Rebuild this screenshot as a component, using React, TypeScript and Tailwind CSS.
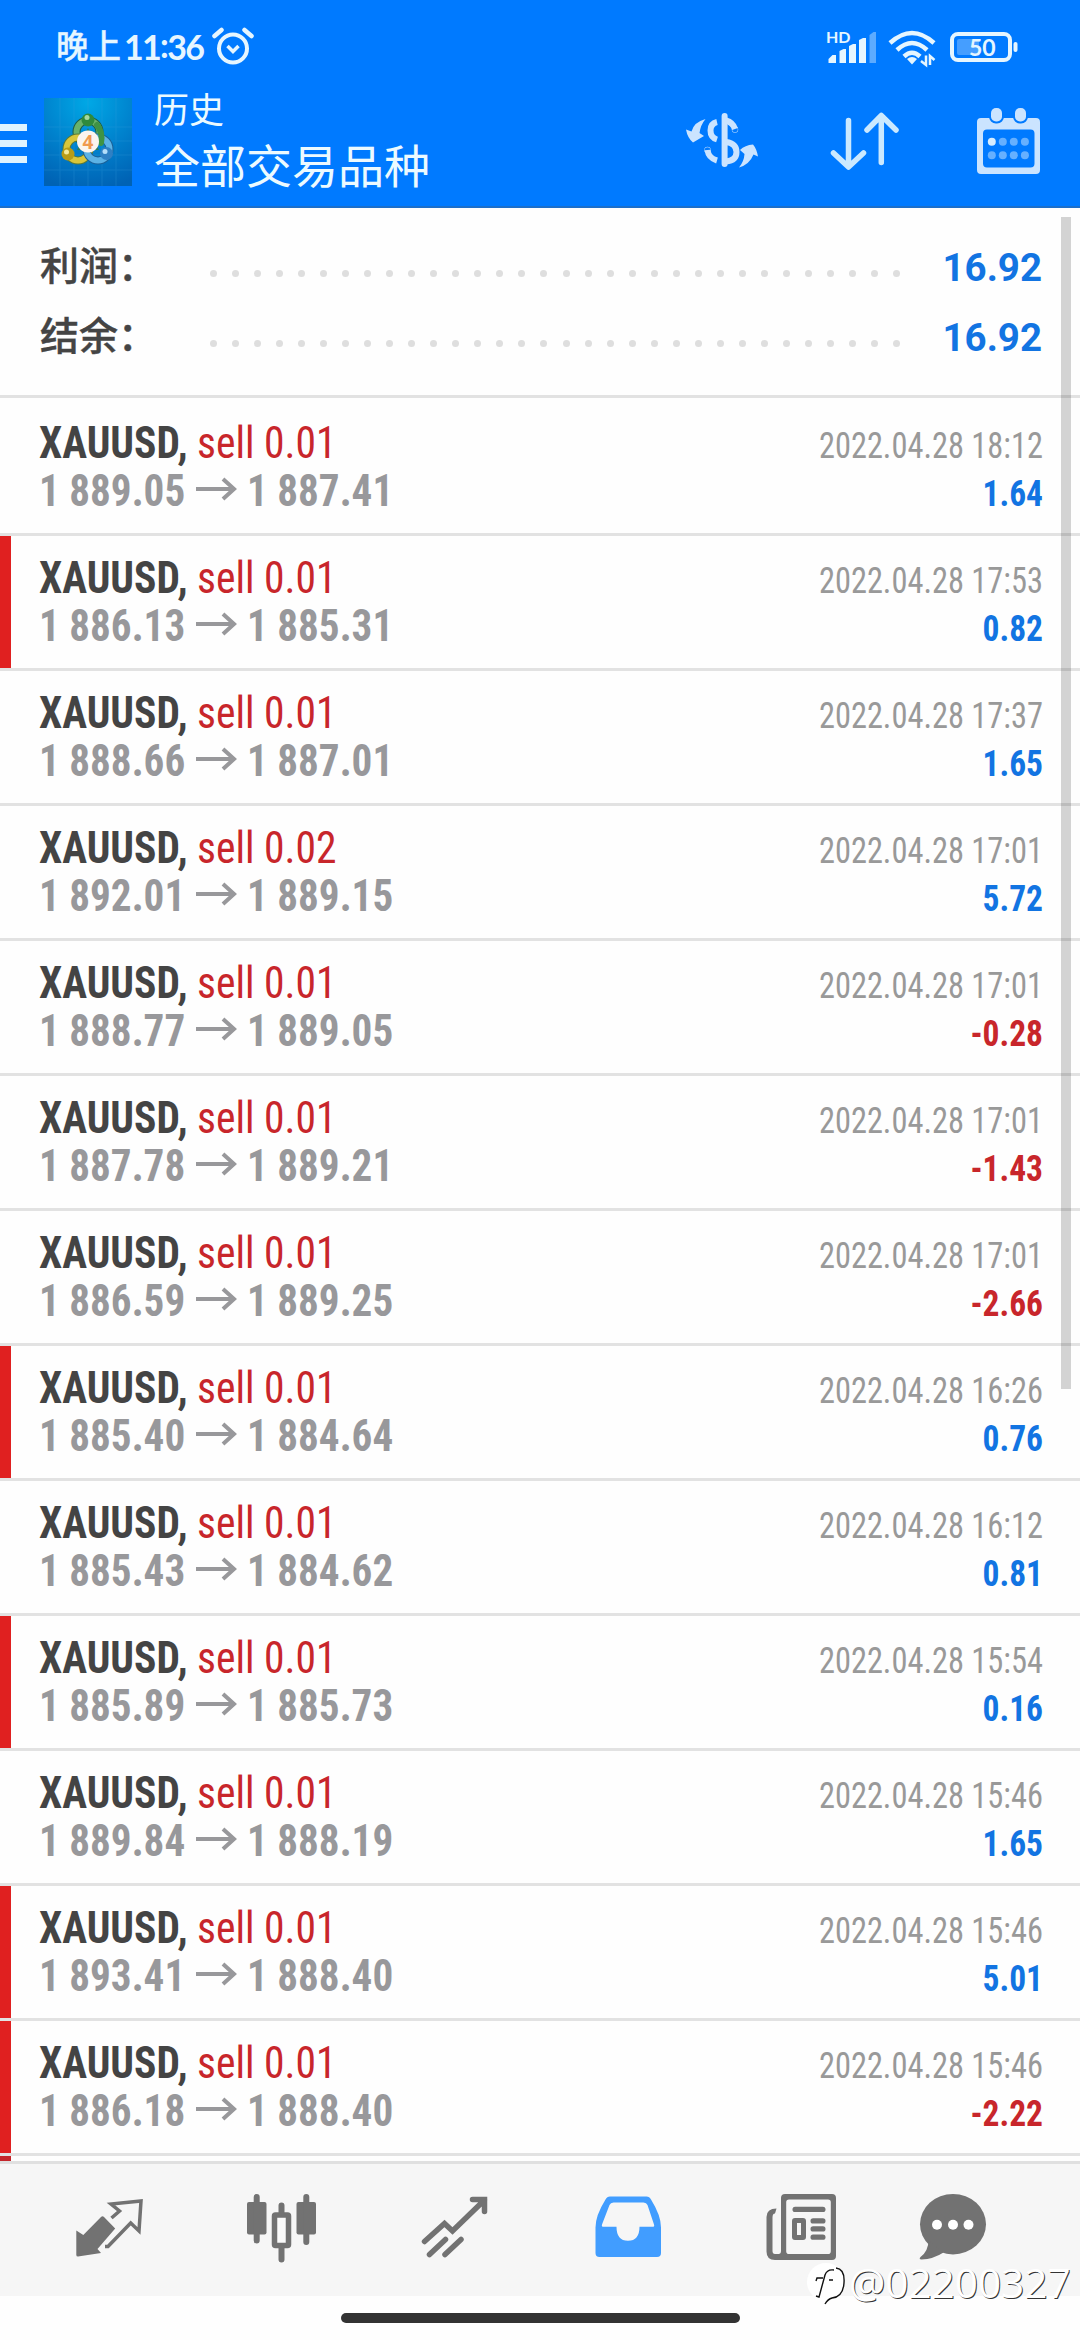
import { clsx } from "clsx";
import type { ReactNode } from "react";

type Deal = {
  volume: string;
  open: string;
  close: string;
  time: string;
  profit: string;
  marked?: boolean;
};

const deals: Deal[] = [
  { volume: "0.01", open: "1 889.05", close: "1 887.41", time: "18:12", profit: "1.64" },
  { volume: "0.01", open: "1 886.13", close: "1 885.31", time: "17:53", profit: "0.82", marked: true },
  { volume: "0.01", open: "1 888.66", close: "1 887.01", time: "17:37", profit: "1.65" },
  { volume: "0.02", open: "1 892.01", close: "1 889.15", time: "17:01", profit: "5.72" },
  { volume: "0.01", open: "1 888.77", close: "1 889.05", time: "17:01", profit: "-0.28" },
  { volume: "0.01", open: "1 887.78", close: "1 889.21", time: "17:01", profit: "-1.43" },
  { volume: "0.01", open: "1 886.59", close: "1 889.25", time: "17:01", profit: "-2.66" },
  { volume: "0.01", open: "1 885.40", close: "1 884.64", time: "16:26", profit: "0.76", marked: true },
  { volume: "0.01", open: "1 885.43", close: "1 884.62", time: "16:12", profit: "0.81" },
  { volume: "0.01", open: "1 885.89", close: "1 885.73", time: "15:54", profit: "0.16", marked: true },
  { volume: "0.01", open: "1 889.84", close: "1 888.19", time: "15:46", profit: "1.65" },
  { volume: "0.01", open: "1 893.41", close: "1 888.40", time: "15:46", profit: "5.01", marked: true },
  { volume: "0.01", open: "1 886.18", close: "1 888.40", time: "15:46", profit: "-2.22", marked: true },
];

function StatusBar() {
  return (
    <div className="flex h-[92px] items-start justify-between pr-[62px] pl-[56px] text-[#e6f6ff]">
      <div className="flex items-start pt-[24px]">
        <span className="text-[32.5px] leading-[46px] font-medium [-webkit-text-stroke:0.3px]">晚上</span>
        <span className="ml-[3px] w-[80px] font-['Lato'] text-[34px] leading-[46px] font-bold tracking-[-1.7px] whitespace-nowrap">
          11<span className="relative -top-0.5">:</span>36
        </span>
        <svg className="mt-[2px] ml-[8px]" width="42" height="40" fill="none" stroke="currentColor">
          <circle cx="21" cy="22.500" r="14" strokeWidth="4" />
          <path d="M2.500 10 9.500 4M39.500 10 32.500 4" strokeWidth="4.500" strokeLinecap="round" />
          <path d="M15.500 20l5.500 5.500 5.500-5.500" strokeWidth="3.5" />
        </svg>
      </div>
      <div className="flex items-start pt-[28px]">
        <svg width="52" height="40" fill="currentColor">
          <text x="0" y="15" className="font-['Lato'] text-[16px] font-bold">HD</text>
          <path d="M2.500 35v-4l4-4h3.500v8zM13.500 35V23l4-2h2.500v14zM23 35V18l4-2h3v19zM33 35V12l4-2h3v25z" />
          <path d="M43.500 35V7l4-3H50v31z" opacity=".4" />
        </svg>
        <svg className="ml-[9px]" width="50" height="40" fill="none" stroke="currentColor" strokeWidth="4.500">
          <path d="M3 15Q25 -5 47 15" />
          <path d="M10 22Q25 8 40 22" />
          <path d="M17 28.500Q25 21 33 28.500" />
          <path d="M20 31q5-4 10 0l-5 5.500z" fill="currentColor" stroke="none" />
          <path d="M39 27.500V37l-5-4M43 37V28l4.500 4" strokeWidth="2.500" />
        </svg>
        <svg className="ml-[11px]" width="70" height="40">
          <rect x="4" y="6" width="58" height="26" rx="6" fill="none" stroke="currentColor" strokeWidth="4" />
          <path d="M11 11h20v16H11q-2 0-2-2V13q0-2 2-2z" fill="#459eff" />
          <rect x="65.500" y="14" width="4" height="10" rx="2" fill="currentColor" />
          <text x="21" y="27.500" fill="currentColor" className="font-['Lato'] text-[23px] font-bold">50</text>
        </svg>
      </div>
    </div>
  );
}

function AppLogo() {
  return (
    <svg width="88" height="88" viewBox="0 0 88 88">
      <defs>
        <radialGradient id="sky" cx=".5" cy=".05" r="1">
          <stop offset="0" stopColor="#00a8e6" />
          <stop offset=".55" stopColor="#0080cc" />
          <stop offset="1" stopColor="#0062b4" />
        </radialGradient>
      </defs>
      <rect width="88" height="88" fill="url(#sky)" />
      <path
        d="M0 29h88M0 43h88M0 57h88M0 72h88M16 0v88M30 0v88M44 0v88M58 0v88M72 0v88"
        stroke="#39a0de"
        opacity=".25"
      />
      <path d="M44 30 33 52h22z" fill="#2f7a5a" />
      <g fill="none" strokeLinecap="round">
        <circle cx="44" cy="34" r="11.500" stroke="#1f5d45" strokeWidth="8" />
        <circle cx="44" cy="34" r="11.500" stroke="#69b26b" strokeWidth="6" />
        <circle cx="34" cy="51" r="11.500" stroke="#5c7a36" strokeWidth="8" />
        <circle cx="34" cy="51" r="11.500" stroke="#d9c63b" strokeWidth="6" />
        <circle cx="54" cy="51" r="11.500" stroke="#1b6097" strokeWidth="8" />
        <circle cx="54" cy="51" r="11.500" stroke="#5cb2e5" strokeWidth="6" />
        <path d="M53 27q6 7 4 18" stroke="#3f9344" strokeWidth="6" />
      </g>
      <circle cx="44" cy="22" r="6.500" fill="#2f8a3c" />
      <circle cx="43" cy="19.500" r="2.500" fill="#a5d8a0" />
      <circle cx="24" cy="56" r="6.500" fill="#b89c16" />
      <circle cx="22.500" cy="54" r="2.500" fill="#f3ea9a" />
      <circle cx="62.500" cy="55.500" r="6.500" fill="#2f80c4" />
      <circle cx="61" cy="53.500" r="2.500" fill="#b4defa" />
      <circle cx="44" cy="43.500" r="11" fill="#fbf4ef" />
      <text
        x="44"
        y="50.500"
        textAnchor="middle"
        fill="#f09a50"
        className="font-['Open_Sans'] text-[19px] font-bold"
      >
        4
      </text>
    </svg>
  );
}

function CurrencyIcon() {
  return (
    <svg width="80" height="80" fill="#cbe4ff">
      <g fill="none" stroke="#cbe4ff" strokeWidth="6">
        <path d="M42.600 16v48" strokeLinecap="round" />
        <path d="M35 22q-6.500 1.500-6.500 8.500t6.500 9M25.500 50q1 8 9.500 10.500M44 20.500q7 2 9 8.500" />
        <path d="M44 42q10.500 1.500 10.500 10T44 61.500" />
        <circle cx="25.500" cy="50" r=".2" strokeLinecap="round" />
        <circle cx="53" cy="29.500" r=".2" strokeLinecap="round" />
      </g>
      <path d="M23.500 19q-5 6-6 14l4.500 3-11 6.500Q5.500 38 4 29.500l5.500 2Q12 22 23.500 19z" />
      <path d="M57 67.500q5-6 5.500-13.500L58 50q5-5 13-5.500 3.500 4 5 12l-4.500-2Q67.500 64.500 57 67.500z" />
    </svg>
  );
}

function SortIcon() {
  return (
    <svg
      width="80"
      height="80"
      fill="none"
      stroke="#cbe9ff"
      strokeWidth="5.500"
      strokeLinecap="round"
      strokeLinejoin="round"
    >
      <path d="M23.500 20.500v46M8.500 53l15 14 15-14M56.300 62.500V16M42 30l14.300-14.500L71 30" />
    </svg>
  );
}

function CalendarIcon() {
  return (
    <svg width="80" height="80" fill="#cbe4ff">
      <path
        fillRule="evenodd"
        d="M13 18h55q4 0 4 4v48q0 4-4 4H13q-4 0-4-4V22q0-4 4-4zM19 29.500q-4 0-4 4V63.500q0 4 4 4h43.500q4 0 4-4v-30q0-4-4-4z"
      />
      <g stroke="#007aff" strokeWidth="4" paintOrder="stroke">
        <rect x="23" y="8" width="11" height="13.500" rx="5" />
        <rect x="47" y="8" width="11" height="13.500" rx="5" />
      </g>
      <circle cx="23.800" cy="41.700" r="4" fill="#d6edff" />
      <g fill="#66b0ff">
        {[34.8, 45.8, 56.9].map((x) => (
          <circle key={x} cx={x} cy="41.700" r="4" />
        ))}
        {[23.8, 34.8, 45.8, 56.9].map((x) => (
          <circle key={x} cx={x} cy="55.300" r="4" />
        ))}
      </g>
    </svg>
  );
}

function Header() {
  return (
    <header className="h-[208px] shrink-0 border-b-2 border-[#1c6fca] bg-[#007aff]">
      <StatusBar />
      <div className="flex items-start pr-8">
        <div className="mt-8 flex w-[27px] flex-col gap-[9px]">
          <div className="h-[7px] bg-[#dff3ff]" />
          <div className="h-[7px] bg-[#dff3ff]" />
          <div className="h-[7px] bg-[#dff3ff]" />
        </div>
        <div className="mt-1.5 ml-[17px]">
          <AppLogo />
        </div>
        <div className="ml-[22px] flex flex-col text-[#ecfaff]">
          <span className="text-[35px] leading-[40px]">历史</span>
          <span className="mt-[5px] text-[46px] leading-[60px]">全部交易品种</span>
        </div>
        <div className="mt-2 ml-auto flex gap-[63px]">
          <CurrencyIcon />
          <SortIcon />
          <CalendarIcon />
        </div>
      </div>
    </header>
  );
}

function SummaryRow({ label, value }: { label: string; value: string }) {
  return (
    <div className="flex h-[70px] items-center">
      <span className="w-[170px] text-[39px] font-medium text-[#444] [-webkit-text-stroke:0.4px]">
        {label}
      </span>
      <div className="mt-[13px] flex w-[690px] justify-between">
        {Array.from({ length: 32 }, (_, i) => (
          <div key={i} className="size-[7px] rounded-full bg-[#dedede]" />
        ))}
      </div>
      <span className="mt-px ml-auto text-[38.5px] font-bold text-[#1274e2]">{value}</span>
    </div>
  );
}

function DealRow({ deal }: { deal: Deal }) {
  return (
    <div className="flex h-[135px] shrink-0 border-b-[3px] border-[#e2e2e2]">
      <div className={clsx("w-[11px]", deal.marked && "bg-[#e02020]")} />
      <div className="flex grow flex-col pt-[18px] pr-[37px] pl-[28px] [font-stretch:75%]">
        <div className="flex h-12 items-baseline justify-between leading-[48px]">
          <span className="origin-left scale-x-[0.943] text-[44px] text-[#c8262b]">
            <span className="font-bold text-[#444]">XAUUSD,</span> sell {deal.volume}
          </span>
          <span className="origin-right scale-x-[0.9] text-[36px] text-[#999]">
            2022.04.28 {deal.time}
          </span>
        </div>
        <div className="flex h-12 items-baseline justify-between leading-[48px] font-bold">
          <div className="flex items-baseline text-[44px] text-[#98989b]">
            <span className="w-[157px] origin-left scale-x-[0.935] whitespace-nowrap">
              {deal.open}
            </span>
            <svg width="42" height="34" fill="none" stroke="currentColor" strokeWidth="4">
              <path d="M0 17h39M27 7l11 10-11 10" />
            </svg>
            <span className="ml-[9px] origin-left scale-x-[0.935]">{deal.close}</span>
          </div>
          <span
            className={clsx(
              "origin-right scale-x-[0.93] text-[36px]",
              deal.profit.startsWith("-") ? "text-[#c8262b]" : "text-[#1274e2]",
            )}
          >
            {deal.profit}
          </span>
        </div>
      </div>
    </div>
  );
}

function Tab({ children, last }: { children: ReactNode; last?: boolean }) {
  return (
    <div className={clsx("flex justify-center pt-6", last ? "w-[132px]" : "w-[173px]")}>
      <svg width="80" height="80" fill="#727272">
        {children}
      </svg>
    </div>
  );
}

function TabBar() {
  return (
    <nav className="flex h-[135px] shrink-0 border-t-[3px] border-[#e0e0e0] bg-[#f6f6f6] pl-[22px]">
      <Tab>
        <path d="M7.300 42.500l7 4.500L32 29q1.500-1.500 3 0l11.200 11.500L28.500 61l3.500 4-23 3.500q-1.700 0-1.700-1.500z" />
        <path
          d="M42.500 30l8-7-8.500-7 30-3-2 30-8.300-8L39 58.500h-3"
          fill="none"
          stroke="#727272"
          strokeWidth="3.500"
        />
      </Tab>
      <Tab>
        <rect x="5" y="14" width="19.500" height="32.500" rx="2" />
        <rect x="54.500" y="14" width="19.500" height="32.500" rx="2" />
        <rect x="32.500" y="27" width="14" height="30.500" rx="1" fill="#fafafa" stroke="#727272" strokeWidth="5.500" />
        <path
          d="M14.700 9v43.500M64.300 9v45M39.500 17.500V25M39.500 60v11.500"
          stroke="#727272"
          strokeWidth="6"
          strokeLinecap="round"
        />
      </Tab>
      <Tab>
        <path
          d="M9.500 53.500l20-18 8 7.500 32-31M57.500 11.500h12v12M14.500 66.500l16-15M30 66.500l16-15"
          fill="none"
          stroke="#727272"
          strokeWidth="5.500"
          strokeLinecap="round"
        />
      </Tab>
      <Tab>
        <path
          fill="#419dff"
          fillRule="evenodd"
          d="M22 8.500h36.500q3 0 4.500 3 10 16 10 28V65q0 4-4 4H11.500q-4 0-4-4V39.500q0-12 10-28 1.500-3 4.500-3zM25.500 14.500q-3 0-4 2.500l-7.500 19.500q-.7 2.300 1.500 2.300h13q0 14 11.500 14t11.500-14h13q2.300 0 1.500-2.300L59.500 17q-1-2.500-4-2.500z"
        />
      </Tab>
      <Tab>
        <path
          fillRule="evenodd"
          d="M24 6h47q4 0 4 4v58q0 4-4 4H14q-8.500 0-8.500-8.500V29q0-8.500 10-8.500l-1.500 5q-2.500 0-2.500 4V63q0 3 2.500 3h3.500q2.500 0 2.500-3V10q0-4 4-4zM28 11.500q-2.800 0-2.800 2.800V63.300q0 2.800 2.800 2.800h39q2.800 0 2.800-2.800V14.300q0-2.800-2.800-2.800z"
        />
        <rect x="31.500" y="18.800" width="33" height="5.300" rx="2.600" />
        <rect x="33.500" y="32.500" width="9" height="17" rx=".5" fill="none" stroke="#727272" strokeWidth="5" />
        <rect x="49.500" y="30.200" width="15" height="5.300" rx="2.600" />
        <rect x="49.500" y="38.200" width="15" height="5.300" rx="2.600" />
        <rect x="49.500" y="46.500" width="15" height="5.300" rx="2.600" />
      </Tab>
      <Tab last>
        <ellipse cx="40" cy="36.200" rx="33" ry="30.200" />
        <path d="M15.500 52q0 11-8 17-2 2.500 1 2.500 12-.5 22-7z" />
        <g fill="#fff">
          <circle cx="24" cy="36.800" r="5" />
          <circle cx="40" cy="36.800" r="5" />
          <circle cx="55.500" cy="36.800" r="5" />
        </g>
      </Tab>
    </nav>
  );
}

function Watermark() {
  return (
    <div className="absolute top-[2252px] left-[806px] flex items-center text-white">
      <svg width="42" height="62" fill="none" stroke="#111" strokeWidth="1.400">
        <circle cx="20" cy="30" r="19" fill="#fff" stroke="none" />
        <path d="M30 16q9 1 8 15-1 14-12 15-4 1-7 6M10 44l3 1 6-22q2-6 9-5M10 29l1-3h6M23 28h4" />
      </svg>
      <span className="ml-[1px] font-['Open_Sans'] text-[40.5px] leading-[56px] font-normal [text-shadow:1px_1px_0_#333]">
        @02200327
      </span>
    </div>
  );
}

export default function App() {
  return (
    <div className="relative flex h-[2340px] w-[1080px] flex-col overflow-hidden bg-[#fefefe] font-['Roboto','Noto_Sans_CJK_SC',sans-serif]">
      <Header />
      <section className="h-[190px] shrink-0 border-b-[3px] border-[#e2e2e2] pt-[24px] pr-[38px] pl-[40px]">
        <SummaryRow label="利润：" value="16.92" />
        <SummaryRow label="结余：" value="16.92" />
      </section>
      <main className="flex flex-col pt-[3px]">
        {deals.map((deal, i) => (
          <DealRow key={i} deal={deal} />
        ))}
        <div className="h-[5px] w-[11px] bg-[#c4262b]" />
      </main>
      <TabBar />
      <div className="mt-[17px] h-[10px] w-[399px] self-center rounded-full bg-[#333]" />
      <div className="absolute top-[217px] left-[1061px] h-[1172px] w-[10px] bg-black/17" />
      <Watermark />
    </div>
  );
}
